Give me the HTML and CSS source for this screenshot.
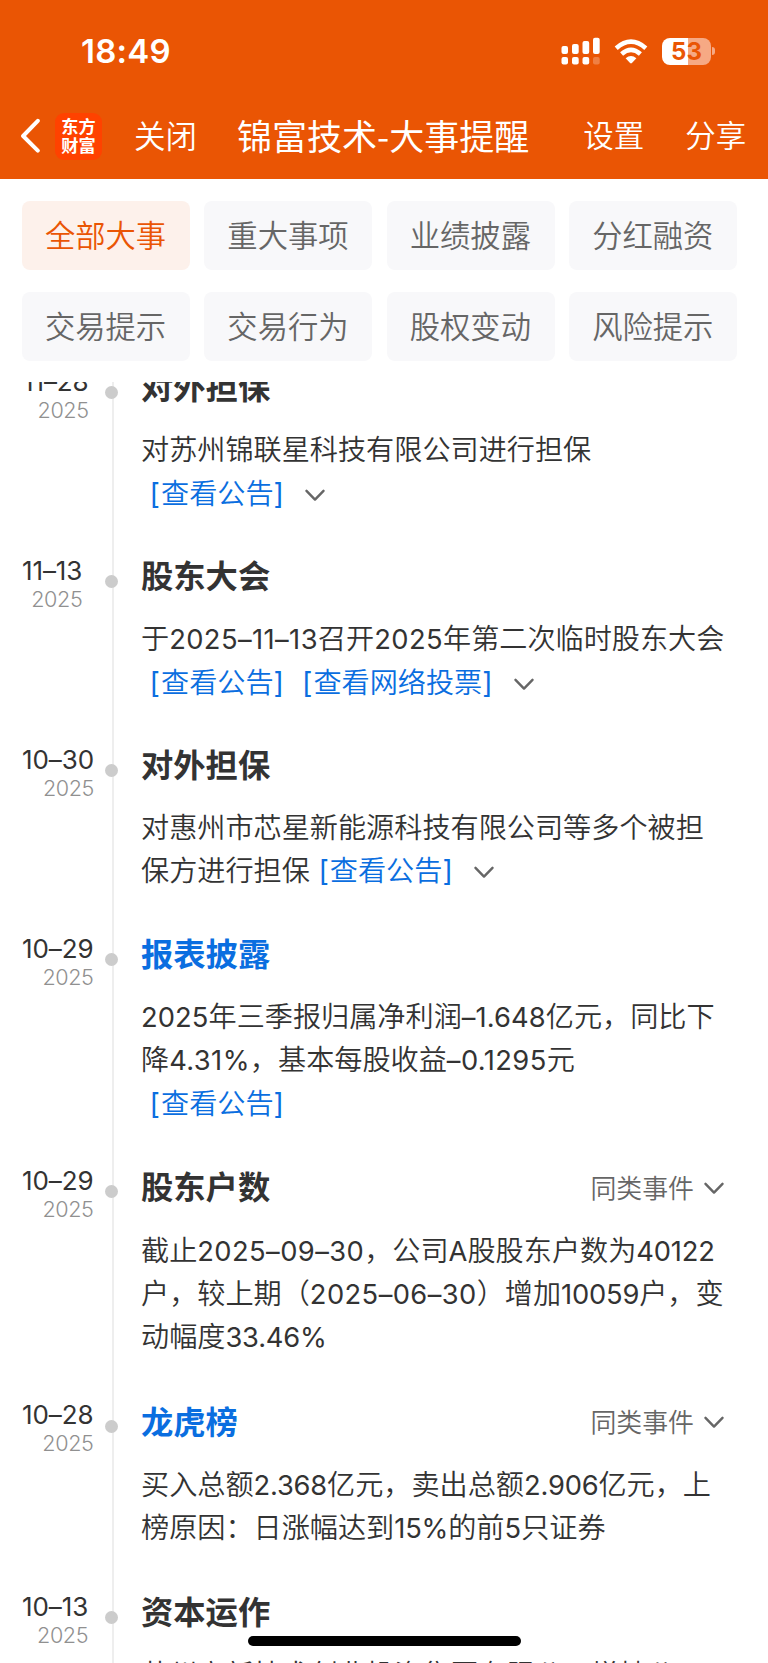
FILE: index.html
```html
<!DOCTYPE html>
<html lang="zh-CN">
<head>
<meta charset="utf-8">
<title>锦富技术-大事提醒</title>
<link rel="stylesheet" href="styles.css">
</head>
<body>
<div class="screen">
  <header class="top">
    <div class="status">
      <span class="clock">18:49</span>
      <span class="indicators">
        <svg class="signal" width="40" height="28" viewBox="0 0 40 28" fill="#fff">
          <rect x="0.5" y="9" width="6.5" height="8" rx="2"/><rect x="11" y="7" width="6.7" height="10" rx="2"/><rect x="21.5" y="4" width="6.7" height="13" rx="2"/><rect x="32" y="0.8" width="6.7" height="16.2" rx="2"/>
          <rect x="0.5" y="20" width="6.5" height="7.6" rx="2"/><rect x="11" y="20" width="6.7" height="7.6" rx="2"/><rect x="21.5" y="20" width="6.7" height="7.6" rx="2"/><rect x="32" y="20" width="6.7" height="7.6" rx="2" opacity=".25"/>
        </svg>
        <svg class="wifi" width="34" height="25" viewBox="0 0 34 25">
          <g fill="none" stroke="#fff" stroke-width="4.6"><path d="M2.2 9.2Q17 -3.8 31.8 9.2"/><path d="M7.6 14.9Q17 6.7 26.4 14.9"/></g>
          <path d="M11.6 19.3Q17 14.7 22.4 19.3L17.9 24Q17 24.8 16.1 24Z" fill="#fff"/>
        </svg>
        <span class="battery"><span class="cell">53</span><span class="nub"></span></span>
      </span>
    </div>
    <nav class="nav">
      <svg class="back" width="20" height="36" viewBox="0 0 20 36"><path d="M17.8 2.8L3.1 18L17.8 32.6" fill="none" stroke="#fff" stroke-width="4" stroke-linecap="round" stroke-linejoin="round"/></svg>
      <span class="logo">东方<br>财富</span>
      <span class="action close">关闭</span>
      <h1 class="heading">锦富技术-大事提醒</h1>
      <span class="action settings">设置</span>
      <span class="action share">分享</span>
    </nav>
  </header>
  <section class="tabs">
    <span class="tab active">全部大事</span><span class="tab">重大事项</span><span class="tab">业绩披露</span><span class="tab">分红融资</span>
    <span class="tab">交易提示</span><span class="tab">交易行为</span><span class="tab">股权变动</span><span class="tab">风险提示</span>
  </section>
  <main class="timeline">
    <article class="event first">
      <div class="when"><div class="date"><b>11–28</b><i>2025</i></div></div>
      <div class="rail"><span class="dot"></span></div>
      <div class="body">
        <h2 class="title">对外担保</h2>
        <p>对苏州锦联星科技有限公司进行担保</p>
        <p><a class="in"><s>[</s>查看公告<s>]</s></a><svg class="chev" width="20" height="13" viewBox="0 0 20 13"><path d="M1.5 1.8L10 10.6L18.5 1.8"/></svg></p>
      </div>
    </article>
    <article class="event">
      <div class="when"><div class="date"><b>11–13</b><i>2025</i></div></div>
      <div class="rail"><span class="dot"></span></div>
      <div class="body">
        <h2 class="title">股东大会</h2>
        <p>于<span class="n wide">2025–11–13</span>召开<span class="n wide">2025</span>年第二次临时股东大会</p>
        <p><a class="in"><s>[</s>查看公告<s>]</s></a><a class="next"><s>[</s>查看网络投票<s>]</s></a><svg class="chev" width="20" height="13" viewBox="0 0 20 13"><path d="M1.5 1.8L10 10.6L18.5 1.8"/></svg></p>
      </div>
    </article>
    <article class="event">
      <div class="when"><div class="date"><b>10–30</b><i>2025</i></div></div>
      <div class="rail"><span class="dot"></span></div>
      <div class="body">
        <h2 class="title">对外担保</h2>
        <p>对惠州市芯星新能源科技有限公司等多个被担</p>
        <p>保方进行担保<a class="in"><s>[</s>查看公告<s>]</s></a><svg class="chev" width="20" height="13" viewBox="0 0 20 13"><path d="M1.5 1.8L10 10.6L18.5 1.8"/></svg></p>
      </div>
    </article>
    <article class="event">
      <div class="when"><div class="date"><b>10–29</b><i>2025</i></div></div>
      <div class="rail"><span class="dot"></span></div>
      <div class="body">
        <h2 class="title linked">报表披露</h2>
        <p><span class="n">2025</span>年三季报归属净利润<span class="n">–1.648</span>亿元，同比下</p>
        <p>降<span class="n wide">4.31%</span>，基本每股收益<span class="n wide">–0.1295</span>元</p>
        <p><a class="in"><s>[</s>查看公告<s>]</s></a></p>
      </div>
    </article>
    <article class="event similar">
      <div class="when"><div class="date"><b>10–29</b><i>2025</i></div></div>
      <div class="rail"><span class="dot"></span></div>
      <div class="body">
        <h2 class="title">股东户数<span class="more">同类事件<svg class="chev" width="20" height="13" viewBox="0 0 20 13"><path d="M1.5 1.8L10 10.6L18.5 1.8"/></svg></span></h2>
        <p>截止<span class="n wide">2025–09–30</span>，公司<span class="n">A</span>股股东户数为<span class="n tight">40122</span></p>
        <p>户，较上期（<span class="n wide">2025–06–30</span>）增加<span class="n tight">10059</span>户，变</p>
        <p>动幅度<span class="n tight">33.46%</span></p>
      </div>
    </article>
    <article class="event similar">
      <div class="when"><div class="date"><b>10–28</b><i>2025</i></div></div>
      <div class="rail"><span class="dot"></span></div>
      <div class="body">
        <h2 class="title linked">龙虎榜<span class="more">同类事件<svg class="chev" width="20" height="13" viewBox="0 0 20 13"><path d="M1.5 1.8L10 10.6L18.5 1.8"/></svg></span></h2>
        <p>买入总额<span class="n tight">2.368</span>亿元，卖出总额<span class="n tight">2.906</span>亿元，上</p>
        <p>榜原因：日涨幅达到<span class="n tight">15%</span>的前<span class="n">5</span>只证券</p>
      </div>
    </article>
    <article class="event">
      <div class="when"><div class="date"><b>10–13</b><i>2025</i></div></div>
      <div class="rail"><span class="dot"></span></div>
      <div class="body">
        <h2 class="title">资本运作</h2>
        <p class="peek">苏州高新技术创业投资集团有限公司增持公</p>
      </div>
    </article>
  </main>
  <div class="home"></div>
</div>
</body>
</html>
```
FILE: styles.css
```css
* { box-sizing: border-box; margin: 0; padding: 0; }
body { background: #fff; font-family: Inter, "Noto Sans CJK SC", sans-serif; color: #333; }
.screen { position: relative; width: 768px; height: 1663px; overflow: hidden; display: flex; flex-direction: column; white-space: nowrap; }
.top { height: 179px; background: #ea5504; color: #fff; flex: none; }
.status { height: 102px; padding: 0 53px 0 81px; display: flex; justify-content: space-between; align-items: center; }
.clock { font-size: 33px; font-weight: 600; letter-spacing: .2px; }
.indicators { display: flex; align-items: center; }
.wifi { margin-left: 13px; }
.battery { margin-left: 14px; display: flex; align-items: center; gap: 1px; }
.cell { width: 49px; height: 27px; border-radius: 8px; background: linear-gradient(90deg, #fff 26px, #f6a984 26px); color: #ea5504; font-size: 24px; font-weight: 700; line-height: 27px; text-align: center; }
.nub { width: 3px; height: 8px; background: #f6a984; border-radius: 0 3px 3px 0; }
.nav { height: 68px; display: flex; align-items: center; padding-left: 20px; font-family: "Noto Sans CJK SC", sans-serif; }
.logo { width: 47px; height: 47px; margin-left: 15px; border-radius: 9px; background: #ff4200; font-size: 17.2px; font-weight: 700; line-height: 19px; padding-top: 3.5px; text-align: center; }
.action { font-size: 30.5px; font-weight: 350; line-height: 44px; padding-bottom: 4px; }
.close { margin-left: 32px; font-size: 31.5px; }
.heading { margin-left: 40px; font-size: 35px; font-weight: 400; line-height: 48px; padding-bottom: 3px; }
.settings { margin-left: 54px; }
.share { margin-left: 41px; }
.tabs { flex: none; height: 203px; padding: 22px 30px 0 22px; display: grid; grid-template-columns: repeat(4, 168px); grid-auto-rows: 69px; column-gap: 14.45px; row-gap: 21.7px; font-family: "Noto Sans CJK SC", sans-serif; }
.tab { border-radius: 8px; background: #f8f8fa; color: #666; font-size: 30.3px; line-height: 66px; text-align: center; font-weight: 350; padding-right: 1px; }
.active { background: #fdf1eb; color: #ea5504; }
.timeline { flex: 1; overflow: hidden; }
.event { display: flex; padding-left: 22px; }
.first { margin-top: -22.8px; }
.when { width: 83px; }
.date { display: inline-block; text-align: right; padding-top: 7.8px; }
.date b { display: block; font-weight: 400; font-size: 26px; line-height: 30px; letter-spacing: -.1px; }
.date i { display: block; font-style: normal; font-weight: 350; font-size: 21.6px; line-height: 27.8px; color: #909090; letter-spacing: -.4px; }
.first .date { margin-left: 1px; }
.rail { width: 36px; background: linear-gradient(#eee, #eee) 7px 0 / 2px 100% no-repeat; padding-top: 27px; }
.dot { display: block; width: 13px; height: 13px; border-radius: 50%; background: #ccc; }
.body { width: 586px; padding-bottom: 35.4px; }
.title { display: flex; justify-content: space-between; align-items: center; height: 52px; font: 700 32.3px/52px "Noto Sans CJK SC", sans-serif; margin-bottom: 15.2px; }
.similar .title { height: 54px; margin-bottom: 14.6px; }
.similar .body { padding-bottom: 36.2px; }
.title.linked { color: #0a6ee0; }
.more { display: flex; align-items: center; gap: 10px; padding: 3px 3px 0 0; font-size: 25.9px; font-weight: 350; color: #666; }
.more .chev { margin-top: 3px; }
.body p { height: 43.2px; line-height: 43.2px; font-family: "Noto Sans CJK SC", sans-serif; font-size: 28.15px; font-weight: 350; }
.n { font-family: Inter, sans-serif; font-size: 27.3px; font-weight: 400; letter-spacing: .1px; }
.wide { letter-spacing: .42px; }
.tight { letter-spacing: -.2px; }
.body .peek { padding-top: .5px; }
.body a { color: #0a6ee0; }
.body s { font-family: Inter, sans-serif; font-weight: 400; font-size: 28.5px; letter-spacing: 1px; text-decoration: none; }
.in { margin-left: 8.6px; }
.next { margin-left: 17px; }
.chev { fill: none; stroke: #666; stroke-width: 2.4; stroke-linecap: round; stroke-linejoin: round; }
p .chev { margin-left: 20px; vertical-align: 2px; }
.home { position: absolute; left: 248px; top: 1636px; width: 273px; height: 10px; border-radius: 5px; background: #000; }
```
